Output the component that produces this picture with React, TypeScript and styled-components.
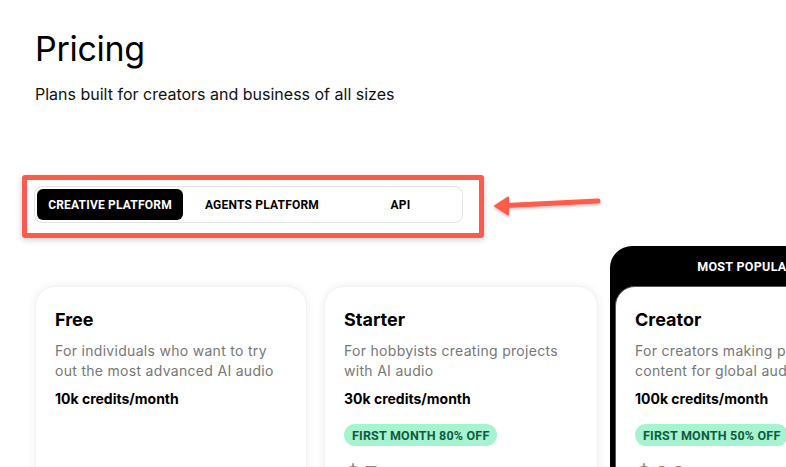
import styled, { createGlobalStyle } from 'styled-components';

const GlobalStyle = createGlobalStyle`
  body {
    margin: 0;
    background: #ffffff;
    font-family: Inter, "Noto Sans", sans-serif;
    color: #000;
    overflow: hidden;
  }
`;

const Page = styled.div`
  width: 786px;
  height: 467px;
  padding: 27px 0 0 35px;
  box-sizing: border-box;
  overflow: hidden;
`;

const Title = styled.h1`
  margin: 0;
  font-size: 34px;
  font-weight: 400;
  line-height: 44px;
  letter-spacing: -0.3px;
`;

const Subtitle = styled.p`
  margin: 12px 0 0;
  font-size: 16px;
  line-height: 22px;
  color: #111;
`;

const HighlightRow = styled.div`
  display: flex;
  align-items: center;
  gap: 11px;
  margin: 70px 0 0 -13px;
`;

const Highlight = styled.div`
  border: 5px solid #ff5b4c;
  border-radius: 3px;
  padding: 6px 16px 10px 7px;
  box-shadow: 0 2px 6px rgba(0, 0, 0, 0.18);
`;

const Tabs = styled.div`
  display: grid;
  grid-template-columns: 146px 158px 119px;
  width: 429px;
  box-sizing: border-box;
  padding: 2px;
  border: 1px solid #e4e4e4;
  border-radius: 8px;
`;

const Tab = styled.div<{ $active?: boolean }>`
  height: 31px;
  display: flex;
  align-items: center;
  justify-content: center;
  border-radius: 6px;
  font-family: "Roboto", Inter, sans-serif;
  font-weight: 700;
  font-size: 12px;
  letter-spacing: 0.2px;
  background: ${p => (p.$active ? '#000' : 'transparent')};
  color: ${p => (p.$active ? '#fff' : '#000')};
`;

const Arrow = () => (
  <svg width="110" height="24" viewBox="0 0 110 24" style={{ overflow: 'visible' }}>
    <defs>
      <filter id="ash" x="-10%" y="-50%" width="120%" height="200%">
        <feDropShadow dx="0" dy="1.5" stdDeviation="1.5" floodColor="#000" floodOpacity="0.25" />
      </filter>
    </defs>
    <g filter="url(#ash)" fill="#ff5b4c" stroke="#ff5b4c" strokeLinecap="round" strokeLinejoin="round">
      <line x1="12" y1="10.5" x2="103" y2="6" strokeWidth="5" />
      <polygon points="0,11 13,2.5 13,19.5" strokeWidth="2" />
    </g>
  </svg>
);

const CardRow = styled.div`
  display: flex;
  align-items: flex-start;
  gap: 17px;
  margin-top: 8px;
`;

const Card = styled.div<{ $width: number; $inner?: boolean }>`
  width: ${p => p.$width}px;
  flex-shrink: 0;
  min-height: 220px;
  box-sizing: border-box;
  margin-top: ${p => (p.$inner ? 0 : 40)}px;
  padding: 21px 19px;
  background: #fff;
  border-radius: 20px;
  box-shadow: ${p => (p.$inner ? 'none' : '0 0 10px rgba(0, 0, 0, 0.07)')};
  border: ${p => (p.$inner ? '1px solid #555' : '1px solid #f2f2f2')};
`;

const Popular = styled.div`
  width: 272px;
  flex-shrink: 0;
  margin-left: -5px;
  background: #000;
  border-radius: 22px 22px 0 0;
  padding: 0 5px;
  box-sizing: border-box;
`;

const PopularHead = styled.div`
  height: 40px;
  display: flex;
  align-items: center;
  justify-content: center;
  color: #fff;
  font-family: "Roboto", Inter, sans-serif;
  font-weight: 700;
  font-size: 12.5px;
  letter-spacing: 0.3px;
`;

const PlanName = styled.h2`
  margin: 0;
  font-size: 18px;
  font-weight: 700;
  line-height: 24px;
`;

const PlanDesc = styled.p`
  margin: 9px 0 0;
  font-size: 14px;
  line-height: 19.5px;
  color: #777;
  letter-spacing: 0.3px;
`;

const Credits = styled.div`
  margin-top: 9px;
  font-size: 14px;
  font-weight: 700;
  line-height: 20px;
`;

const Badge = styled.span`
  display: inline-flex;
  align-items: center;
  height: 22px;
  margin-top: 15px;
  padding: 0 8px;
  border-radius: 11px;
  background: #a7f3d0;
  color: #0d5c3f;
  font-family: "Roboto", Inter, sans-serif;
  font-weight: 700;
  font-size: 12.5px;
  letter-spacing: 0.2px;
`;

const Price = styled.div`
  margin-top: 14px;
  font-size: 28px;
  line-height: 34px;
  color: #8a8a8a;
`;

type Plan = {
  name: string;
  desc: string;
  credits: string;
  badge?: string;
  price?: string;
};

const PlanBody = ({ plan }: { plan: Plan }) => (
  <>
    <PlanName>{plan.name}</PlanName>
    <PlanDesc>{plan.desc}</PlanDesc>
    <Credits>{plan.credits}</Credits>
    {plan.badge && <Badge>{plan.badge}</Badge>}
    {plan.price && <Price>{plan.price}</Price>}
  </>
);

const plans: Plan[] = [
  {
    name: 'Free',
    desc: 'For individuals who want to try out the most advanced AI audio',
    credits: '10k credits/month',
  },
  {
    name: 'Starter',
    desc: 'For hobbyists creating projects with AI audio',
    credits: '30k credits/month',
    badge: 'FIRST MONTH 80% OFF',
    price: '$5',
  },
  {
    name: 'Creator',
    desc: 'For creators making premium content for global audiences',
    credits: '100k credits/month',
    badge: 'FIRST MONTH 50% OFF',
    price: '$22',
  },
];

export default function App() {
  return (
    <Page>
      <GlobalStyle />
      <Title>Pricing</Title>
      <Subtitle>Plans built for creators and business of all sizes</Subtitle>

      <HighlightRow>
        <Highlight>
          <Tabs>
            <Tab $active>CREATIVE PLATFORM</Tab>
            <Tab>AGENTS PLATFORM</Tab>
            <Tab>API</Tab>
          </Tabs>
        </Highlight>
        <Arrow />
      </HighlightRow>

      <CardRow>
        <Card $width={272}>
          <PlanBody plan={plans[0]} />
        </Card>
        <Card $width={274}>
          <PlanBody plan={plans[1]} />
        </Card>
        <Popular>
          <PopularHead>MOST POPULAR</PopularHead>
          <Card $width={262} $inner>
            <PlanBody plan={plans[2]} />
          </Card>
        </Popular>
      </CardRow>
    </Page>
  );
}
